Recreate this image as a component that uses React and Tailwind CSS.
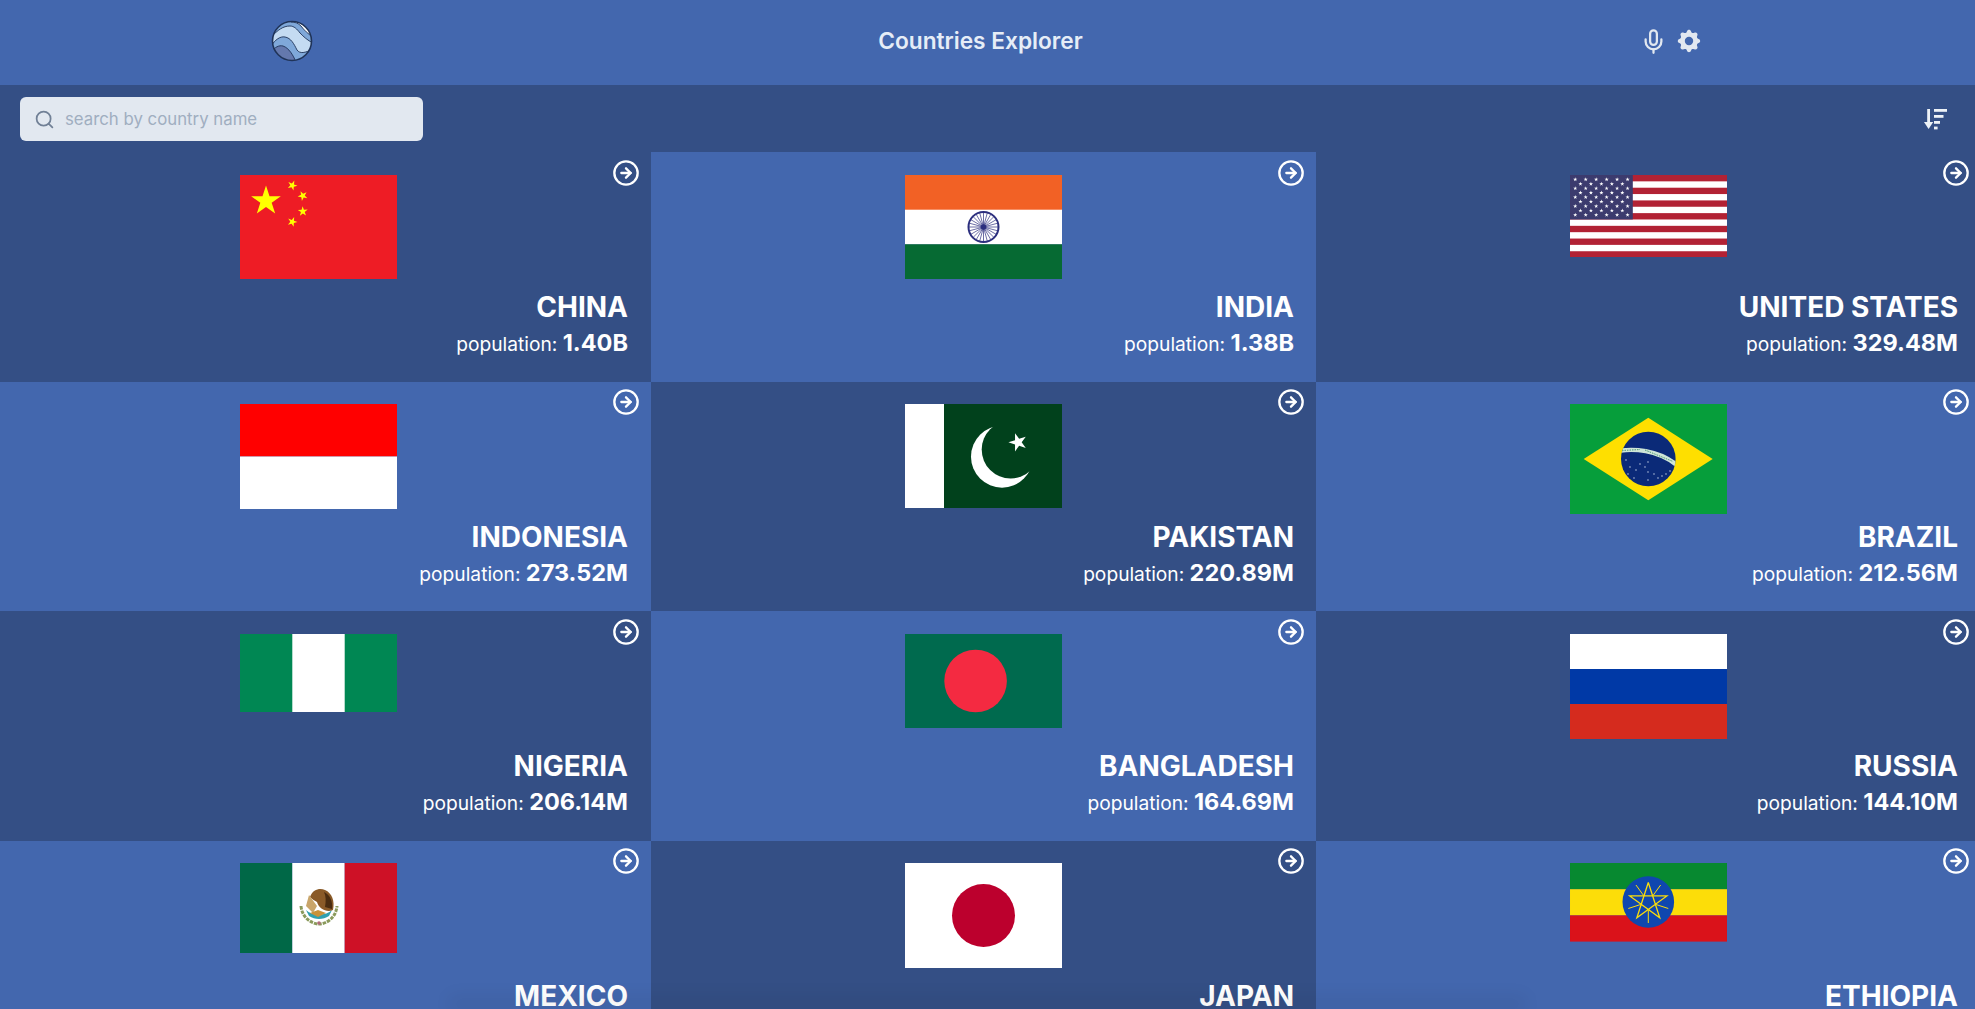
import React from "react";
import { Search, Mic, CircleArrowRight } from "lucide-react";
import { HiCog } from "react-icons/hi";

const starPts = (cx, cy, r, rot = 0) => {
  const p = [];
  for (let i = 0; i < 10; i++) {
    const rad = i % 2 ? r * 0.382 : r;
    const a = ((-90 + rot + i * 36) * Math.PI) / 180;
    p.push(`${(cx + rad * Math.cos(a)).toFixed(2)},${(cy + rad * Math.sin(a)).toFixed(2)}`);
  }
  return p.join(" ");
};

const Svg = ({ h, children }) => (
  <svg width="157" height={h} viewBox={`0 0 157 ${h}`} className="block shrink-0">{children}</svg>
);

const China = () => (
  <Svg h={104}>
    <rect width="157" height="104" fill="#EE1C25" />
    <polygon points={starPts(26, 26, 15.6)} fill="#FFFF00" />
    <polygon points={starPts(52.3, 10.4, 5.2, 23)} fill="#FFFF00" />
    <polygon points={starPts(62.8, 20.8, 5.2, 46)} fill="#FFFF00" />
    <polygon points={starPts(62.8, 36.4, 5.2, 70)} fill="#FFFF00" />
    <polygon points={starPts(52.3, 46.8, 5.2, 21)} fill="#FFFF00" />
  </Svg>
);

const India = () => (
  <Svg h={104}>
    <rect width="157" height="35" fill="#F26125" />
    <rect y="34.7" width="157" height="34.7" fill="#fff" />
    <rect y="69.3" width="157" height="34.7" fill="#066A33" />
    <circle cx="78.5" cy="52" r="15" fill="none" stroke="#2C2F7E" strokeWidth="2" />
    <circle cx="78.5" cy="52" r="2.8" fill="#2C2F7E" />
    {Array.from({ length: 24 }, (_, i) => {
      const a = (i * 15 * Math.PI) / 180;
      return (
        <line key={i} x1="78.5" y1="52" x2={78.5 + 14.5 * Math.cos(a)} y2={52 + 14.5 * Math.sin(a)} stroke="#2C2F7E" strokeWidth="0.7" />
      );
    })}
  </Svg>
);

const USA = () => {
  const h = 82.6;
  const sh = h / 13;
  const stars = [];
  const cw = 62.8;
  const ch = sh * 7;
  for (let r = 0; r < 9; r++) {
    const n = r % 2 ? 5 : 6;
    for (let c = 0; c < n; c++) {
      const x = (cw / 12) * (r % 2 ? 2 + c * 2 : 1 + c * 2);
      const y = (ch / 10) * (r + 1);
      stars.push(<polygon key={`${r}-${c}`} points={starPts(x, y, 2.2)} fill="#fff" />);
    }
  }
  return (
    <Svg h={h}>
      <rect width="157" height={h} fill="#B22234" />
      {[1, 3, 5, 7, 9, 11].map((i) => (
        <rect key={i} y={i * sh} width="157" height={sh} fill="#fff" />
      ))}
      <rect width={cw} height={ch} fill="#3C3B6E" />
      {stars}
    </Svg>
  );
};

const Indonesia = () => (
  <Svg h={105}>
    <rect width="157" height="52.5" fill="#FF0000" />
    <rect y="52.5" width="157" height="52.5" fill="#fff" />
  </Svg>
);

const Pakistan = () => (
  <Svg h={104}>
    <defs>
      <mask id="pk-moon">
        <rect width="157" height="104" fill="#fff" />
        <circle cx="105.6" cy="45.6" r="28.9" fill="#000" />
      </mask>
    </defs>
    <rect width="157" height="104" fill="#01411C" />
    <rect width="39" height="104" fill="#fff" />
    <circle cx="97" cy="52.7" r="31" fill="#fff" mask="url(#pk-moon)" />
    <polygon points={starPts(113, 38.3, 9.6, -18)} fill="#fff" />
  </Svg>
);

const brDots = [
  [56, 56], [60, 63], [58, 70], [66, 66], [70, 60], [75, 63], [78, 58], [78, 68], [84, 70], [88, 74], [92, 72],
  [96, 70], [100, 67], [64, 74], [78, 76],
];
const Brazil = () => (
  <Svg h={110}>
    <defs>
      <clipPath id="br-globe">
        <circle cx="78.3" cy="55" r="27.3" />
      </clipPath>
    </defs>
    <rect width="157" height="110" fill="#069E3B" />
    <polygon points="13.7,55 78.3,13.7 142.7,55 78.3,96.3" fill="#FEDF00" />
    <circle cx="78.3" cy="55" r="27.3" fill="#0B2A78" />
    <g clipPath="url(#br-globe)">
      <path d="M48 47 C62 44.5 88 45 108 62" fill="none" stroke="#CFE6D8" strokeWidth="4.4" />
      <path d="M52 46.5 L70 45.5 M75 46 L103 57.5" fill="none" stroke="#3E8E6B" strokeWidth="0.9" strokeDasharray="1.5 1" />
    </g>
    {brDots.map(([x, y], i) => (
      <circle key={i} cx={x} cy={y} r="0.65" fill="#D8E4F4" />
    ))}
  </Svg>
);

const Nigeria = () => (
  <Svg h={78}>
    <rect width="157" height="78" fill="#008753" />
    <rect x="52.3" width="52.4" height="78" fill="#fff" />
  </Svg>
);

const Bangladesh = () => (
  <Svg h={94}>
    <rect width="157" height="94" fill="#006A4E" />
    <circle cx="70.6" cy="47" r="31.3" fill="#F42A41" />
  </Svg>
);

const Russia = () => (
  <Svg h={105}>
    <rect width="157" height="35" fill="#fff" />
    <rect y="35" width="157" height="35" fill="#0039A6" />
    <rect y="70" width="157" height="35" fill="#D52B1E" />
  </Svg>
);

const Mexico = () => (
  <Svg h={90}>
    <rect width="52.4" height="90" fill="#006847" />
    <rect x="52.3" width="52.4" height="90" fill="#fff" />
    <rect x="104.7" width="52.3" height="90" fill="#CE1126" />
    <path d="M61 43 C62 55 72 61 79 61 C86 61 96 55 97 43" fill="none" stroke="#8A9A5B" strokeWidth="3" strokeDasharray="3.5 1" />
    <path d="M66 47 C72 53 86 53 92 47 L89 53 C83 57 75 57 69 53 Z" fill="#30A0B0" />
    <path d="M70 34 C73 26 80 25 85 27 C92 30 95 38 93 47 C87 50 79 46 77 39 C75 38 72 36 70 34 Z" fill="#8A5A28" />
    <path d="M84 29 C90 32 93 38 92 46 L85 44 C86 38 86 33 84 29Z" fill="#4A2C10" />
    <path d="M69 32 L77 43 L73 50 L66 43 Z" fill="#C9A56A" />
    <path d="M70 50 L78 47 L86 50 L78 54 Z" fill="#C9923A" />
    <circle cx="79" cy="60" r="1.8" fill="#B2697A" />
  </Svg>
);

const Japan = () => (
  <Svg h={105}>
    <rect width="157" height="105" fill="#fff" />
    <circle cx="78.5" cy="52.5" r="31.5" fill="#BC002D" />
  </Svg>
);

const Ethiopia = () => {
  const cx = 78.3;
  const cy = 39;
  const r = 19.5;
  const p = Array.from({ length: 5 }, (_, i) => {
    const a = ((-90 + i * 72) * Math.PI) / 180;
    return [cx + r * Math.cos(a), cy + r * Math.sin(a)];
  });
  const order = [0, 2, 4, 1, 3, 0].map((i) => p[i].map((v) => v.toFixed(2)).join(",")).join(" ");
  return (
    <Svg h={78.6}>
      <rect width="157" height="26.2" fill="#078930" />
      <rect y="26.2" width="157" height="26.2" fill="#FCDD09" />
      <rect y="52.4" width="157" height="26.2" fill="#DA121A" />
      <circle cx={cx} cy={cy} r="25.8" fill="#0F47AF" />
      <polyline points={order} fill="none" stroke="#FCDD09" strokeWidth="1.3" />
      {Array.from({ length: 5 }, (_, i) => {
        const a = ((90 + i * 72) * Math.PI) / 180;
        return (
          <line key={i} x1={cx + 8 * Math.cos(a)} y1={cy + 8 * Math.sin(a)} x2={cx + 21 * Math.cos(a)} y2={cy + 21 * Math.sin(a)} stroke="#FCDD09" strokeWidth="1" />
        );
      })}
    </Svg>
  );
};

const Globe = () => (
  <svg width="42" height="42" viewBox="0 0 42 42" className="block">
    <defs>
      <clipPath id="globe-clip">
        <circle cx="21" cy="21" r="19.5" />
      </clipPath>
    </defs>
    <g clipPath="url(#globe-clip)" stroke="#1F3358" strokeWidth="0.9">
      <rect width="42" height="42" fill="#C4DBF2" />
      <path d="M0 0 L42 0 L42 23 C36 20 33 17 29 13 C26 9 23 6 19 6 C12 6 7 10 0 17 Z" fill="#7FA8D9" />
      <path d="M20 0 L42 0 L42 17 C37 14 33 10 30 6 C27 3 24 2 20 2 Z" fill="#FFFFFF" />
      <path d="M0 26 C4 20 9 16 14 17 C20 18 23 24 26 30 C29 34 34 33 42 29 L42 42 L0 42 Z" fill="#7FA8D9" />
      <path d="M0 32 C4 27 8 25 12 26 C18 28 22 35 25 42 L0 42 Z" fill="#6478AD" />
    </g>
    <circle cx="21" cy="21" r="19.5" fill="none" stroke="#1F3358" strokeWidth="1.6" />
  </svg>
);

const SortIcon = () => (
  <svg width="24" height="22" viewBox="0 0 24 22" className="block" fill="#EDF2F7">
    <rect x="3.2" y="1" width="2.8" height="16" />
    <polygon points="0,14 9.2,14 4.6,21" />
    <rect x="10" y="1" width="13" height="2.8" />
    <rect x="10" y="7" width="9.5" height="2.8" />
    <rect x="10" y="13" width="6" height="2.8" />
    <rect x="10" y="18.6" width="3.6" height="2.8" />
  </svg>
);

const rows = [
  ["CHINA", "1.40B", China],
  ["INDIA", "1.38B", India],
  ["UNITED STATES", "329.48M", USA],
  ["INDONESIA", "273.52M", Indonesia],
  ["PAKISTAN", "220.89M", Pakistan],
  ["BRAZIL", "212.56M", Brazil],
  ["NIGERIA", "206.14M", Nigeria],
  ["BANGLADESH", "164.69M", Bangladesh],
  ["RUSSIA", "144.10M", Russia],
  ["MEXICO", "", Mexico],
  ["JAPAN", "", Japan],
  ["ETHIOPIA", "", Ethiopia],
];

const colClass = [
  { flag: "pl-[240px]", text: "pr-[23px]", arrow: "right-[11px]" },
  { flag: "pl-[254px]", text: "pr-[22px]", arrow: "right-[11px]" },
  { flag: "pl-[254px]", text: "pr-[17px]", arrow: "right-[5px]" },
];

const Card = ({ name, pop, Flag, index }) => {
  const col = colClass[index % 3];
  const light = index % 2 === 1;
  return (
    <div className={`relative flex h-[229.5px] flex-col pt-[22.5px] ${light ? "bg-[#4367AE]" : "bg-[#344F85]"}`}>
      <CircleArrowRight size={28} strokeWidth={2} className={`absolute top-[6.5px] text-white ${col.arrow}`} />
      <div className={`h-[114.5px] ${col.flag}`}>
        <Flag />
      </div>
      <div className={`text-right text-white ${col.text}`}>
        <div className="text-[28px] leading-[36px] font-bold">{name}</div>
        {pop && (
          <div className="mt-[4px] text-[19.2px] leading-[28px]">
            population: <span className="text-[23.5px] font-bold">{pop}</span>
          </div>
        )}
      </div>
    </div>
  );
};

export default function App() {
  return (
    <div className="relative h-[1009px] overflow-hidden bg-[#344F85] font-['Inter',sans-serif]">
      <header className="flex h-[85px] items-center bg-[#4367AE] pb-[3px]">
        <div className="ml-[271px] w-[42px]">
          <Globe />
        </div>
        <h1 className="ml-[565px] w-[205px] text-center text-[22.7px] font-semibold whitespace-nowrap text-[#E6EDF7]">Countries Explorer</h1>
        <div className="ml-[557px] flex items-center gap-[8px] text-[#E2E8F0]">
          <Mic size={27} strokeWidth={2} />
          <HiCog size={28} />
        </div>
      </header>
      <div className="flex h-[67.4px] items-start justify-between pt-[12px] pr-[27px] pl-[20px]">
        <div className="flex h-[44px] w-[403px] items-center rounded-[6px] bg-[#E2E8F0] pl-[14px]">
          <Search size={21} strokeWidth={2} className="text-[#718096]" />
          <span className="ml-[10px] pt-[2px] text-[16.8px] text-[#A0AEC0]">search by country name</span>
        </div>
        <div className="mt-[11px]">
          <SortIcon />
        </div>
      </div>
      <div className="grid grid-cols-[651px_665px_659px]">
        {rows.map(([n, p, F], i) => (
          <Card key={n} name={n} pop={p} Flag={F} index={i} />
        ))}
      </div>
      <div className="pointer-events-none absolute right-[450px] bottom-0 left-[450px] h-[16px] bg-linear-to-t from-black/10 to-transparent blur-sm" />
    </div>
  );
}
